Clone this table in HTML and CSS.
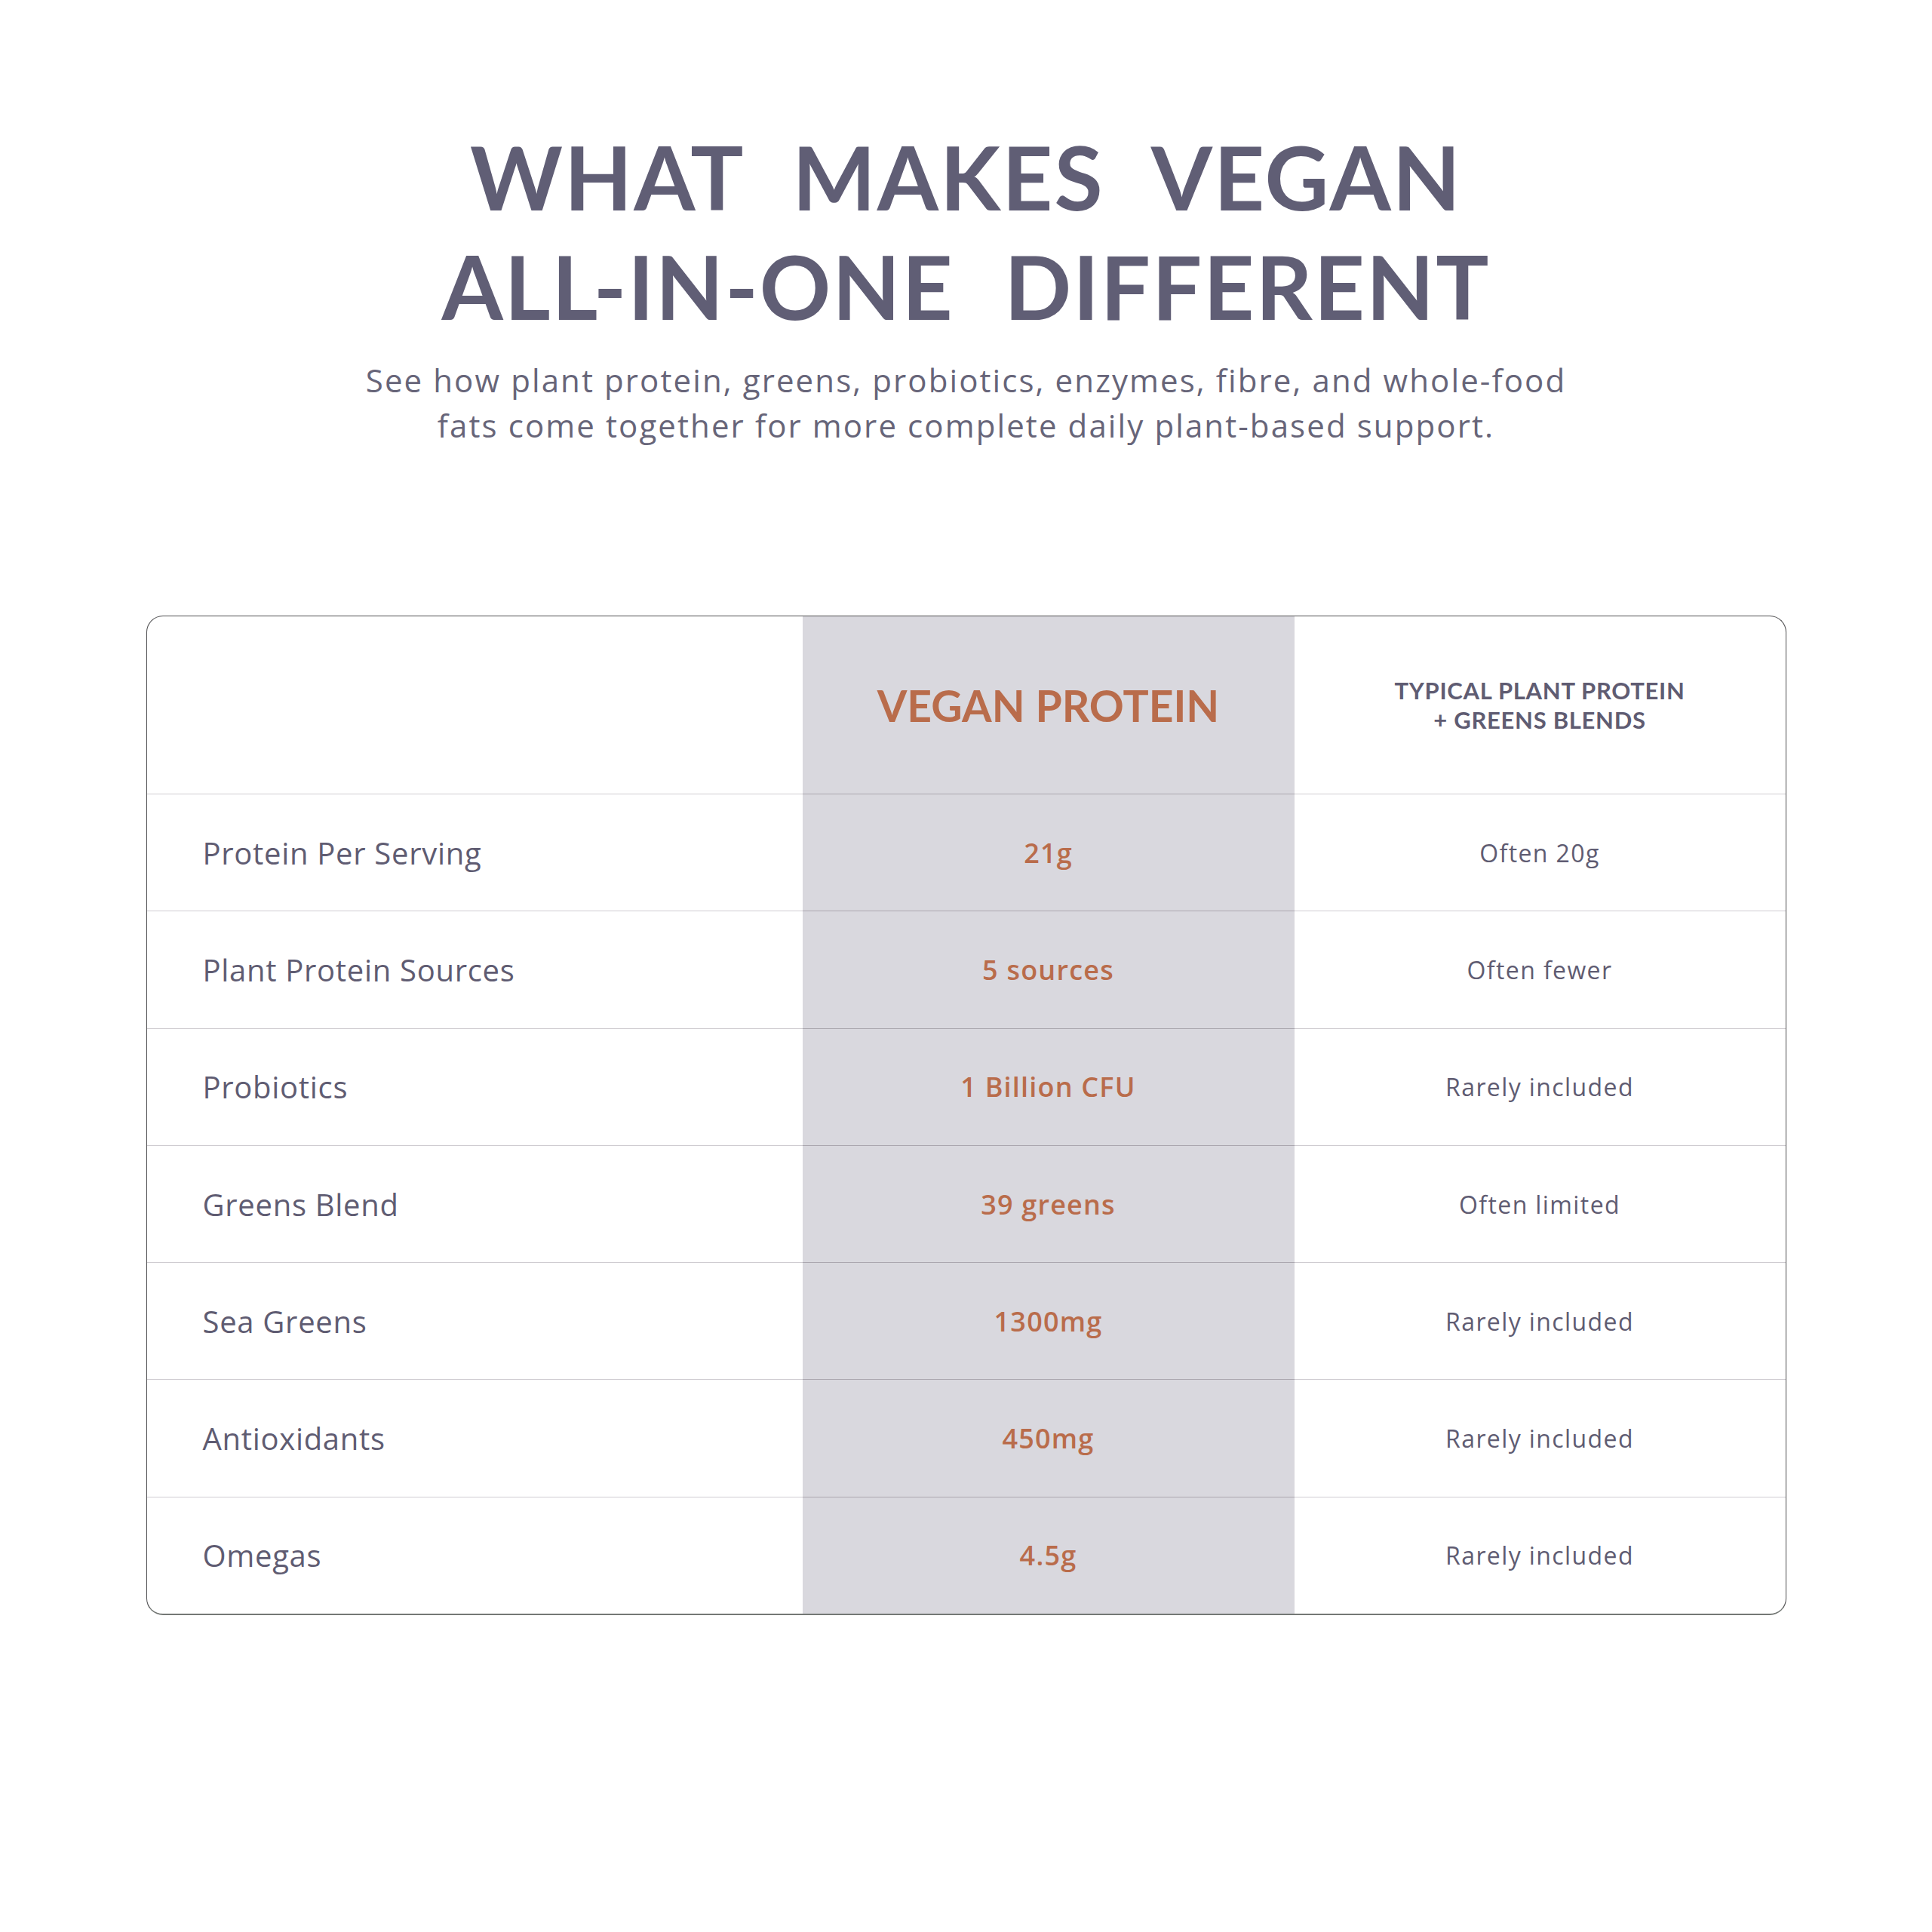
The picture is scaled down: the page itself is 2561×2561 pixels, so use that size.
FILE: index.html
```html
<!DOCTYPE html>
<html lang="en">
<head>
<meta charset="utf-8">
<title>What Makes Vegan All-In-One Different</title>
<link rel="stylesheet" href="styles.css">
</head>
<body>
<main class="page">
  <h1 class="title">WHAT MAKES VEGAN<br>ALL-IN-ONE DIFFERENT</h1>
  <p class="subtitle">See how plant protein, greens, probiotics, enzymes, fibre, and whole-food<br>fats come together for more complete daily plant-based support.</p>

  <div class="compare">
    <div class="cell head label"></div>
    <div class="cell head ours"><span class="ours-title">VEGAN PROTEIN</span></div>
    <div class="cell head theirs"><span class="theirs-title">TYPICAL PLANT PROTEIN<br>+ GREENS BLENDS</span></div>

    <div class="cell label">Protein Per Serving</div>
    <div class="cell ours">21g</div>
    <div class="cell theirs">Often 20g</div>

    <div class="cell label">Plant Protein Sources</div>
    <div class="cell ours">5 sources</div>
    <div class="cell theirs">Often fewer</div>

    <div class="cell label">Probiotics</div>
    <div class="cell ours">1 Billion CFU</div>
    <div class="cell theirs">Rarely included</div>

    <div class="cell label">Greens Blend</div>
    <div class="cell ours">39 greens</div>
    <div class="cell theirs">Often limited</div>

    <div class="cell label">Sea Greens</div>
    <div class="cell ours">1300mg</div>
    <div class="cell theirs">Rarely included</div>

    <div class="cell label">Antioxidants</div>
    <div class="cell ours">450mg</div>
    <div class="cell theirs">Rarely included</div>

    <div class="cell label">Omegas</div>
    <div class="cell ours">4.5g</div>
    <div class="cell theirs">Rarely included</div>
  </div>
</main>
</body>
</html>
```

FILE: styles.css
```css
html, body {
  margin: 0;
  padding: 0;
  background: #ffffff;
}

body {
  font-family: "Open Sans", "Noto Sans", "Liberation Sans", sans-serif;
  color: #605d74;
}

.page {
  display: flex;
  flex-direction: column;
  align-items: center;
  padding-top: 162px;
}

.title {
  margin: 0;
  font-family: Lato, "Liberation Sans", sans-serif;
  font-weight: 700;
  font-size: 117px;
  line-height: 145px;
  letter-spacing: 2px;
  word-spacing: 36px;
  text-align: center;
  color: #605e75;
}

.subtitle {
  margin: 22px 0 0;
  font-size: 42px;
  line-height: 60px;
  letter-spacing: 2.1px;
  text-align: center;
  color: #676579;
}

.compare {
  margin-top: 222px;
  width: 2174px;
  box-sizing: border-box;
  display: grid;
  grid-template-columns: 869px 652px 1fr;
  grid-template-rows: 235px;
  grid-auto-rows: 155.3px;
  border: 1px solid #4e4e50;
  border-bottom: 2px solid #747875;
  border-radius: 22px;
  overflow: hidden;
}

.cell {
  display: flex;
  align-items: center;
  border-top: 1px solid #cfccd1;
  box-sizing: border-box;
}

.cell.head {
  border-top: none;
}

.label {
  padding-left: 74px;
  font-size: 40px;
  letter-spacing: 0.7px;
  color: #5f5c72;
}

.ours {
  justify-content: center;
  background: #d9d8de;
  border-top-color: #aba7af;
  font-size: 36px;
  font-weight: 600;
  letter-spacing: 1.2px;
  color: #b96c4b;
}

.theirs {
  justify-content: center;
  text-align: center;
  font-size: 32px;
  letter-spacing: 1.4px;
  color: #5f5c72;
}

.ours-title {
  font-family: Lato, "Liberation Sans", sans-serif;
  font-size: 57px;
  font-weight: 700;
  letter-spacing: 0;
  color: #b96c4b;
}

.theirs-title {
  font-family: Lato, "Liberation Sans", sans-serif;
  font-size: 31px;
  line-height: 39px;
  font-weight: 700;
  letter-spacing: 0.7px;
  color: #5f5c72;
}
```
